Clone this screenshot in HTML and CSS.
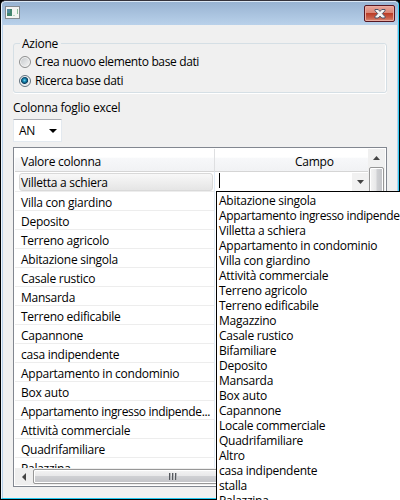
FILE: index.html
```html
<!DOCTYPE html>
<html lang="it">
<head>
<meta charset="utf-8">
<title>Ricerca base dati</title>
<link rel="stylesheet" href="styles.css">
</head>
<body>
<div class="window">
  <header class="titlebar">
    <svg class="app-icon" width="15" height="13" viewBox="0 0 15 13">
      <rect x=".5" y=".5" width="14" height="12" fill="#f4f4f2" stroke="#858b91"/>
      <rect x="2" y="3" width="5" height="7" fill="#43856f"/>
      <rect x="2" y="3" width="3" height="4" fill="#528da0"/>
      <rect x="8" y="9" width="2" height="1" fill="#b5d7bf"/>
      <rect x="12" y="3" width="1" height="5" fill="#8bbd99"/>
    </svg>
    <button class="close" aria-label="Chiudi">
      <svg width="12" height="10" viewBox="0 0 12 10">
        <path d="M1 .5h3.200L6 2.400 7.800.5H11v1.300L8.300 4.600 11 7.600v1.400H7.800L6 7.100 4.200 9H1V7.600l2.700-3L1 1.800z" fill="#f5f5f5" stroke="#4c5568"/>
      </svg>
    </button>
  </header>
  <main class="content">
    <fieldset class="group">
      <legend>Azione</legend>
      <div class="option"><span class="radio"></span><span>Crea nuovo elemento base dati</span></div>
      <div class="option"><span class="radio checked"></span><span>Ricerca base dati</span></div>
    </fieldset>
    <div class="label">Colonna foglio excel</div>
    <div class="combo"><span>AN</span><svg width="8" height="4" viewBox="0 0 8 4"><path d="M0 0h8L4 4z"/></svg></div>
    <section class="table">
      <div class="view">
        <div class="first">
          <div class="head">Valore colonna</div>
          <div class="row selected"><span>Villetta a schiera</span></div>
          <div class="row">Villa con giardino</div>
          <div class="row">Deposito</div>
          <div class="row">Terreno agricolo</div>
          <div class="row">Abitazione singola</div>
          <div class="row">Casale rustico</div>
          <div class="row">Mansarda</div>
          <div class="row">Terreno edificabile</div>
          <div class="row">Capannone</div>
          <div class="row">casa indipendente</div>
          <div class="row">Appartamento in condominio</div>
          <div class="row">Box auto</div>
          <div class="row tight">Appartamento ingresso indipende...</div>
          <div class="row">Attività commerciale</div>
          <div class="row">Quadrifamiliare</div>
          <div class="row">Palazzina</div>
        </div>
        <div class="second">
          <div class="head campo">Campo</div>
          <div class="editor">
            <span class="caret"></span>
            <span class="drop"><svg width="7" height="4" viewBox="0 0 7 4"><path d="M0 0h7L3.500 4z" fill="#444"/></svg></span>
          </div>
          <div class="popup">
            <div>Abitazione singola</div>
            <div class="tight">Appartamento ingresso indipende</div>
            <div>Villetta a schiera</div>
            <div>Appartamento in condominio</div>
            <div>Villa con giardino</div>
            <div>Attività commerciale</div>
            <div>Terreno agricolo</div>
            <div>Terreno edificabile</div>
            <div>Magazzino</div>
            <div>Casale rustico</div>
            <div>Bifamiliare</div>
            <div>Deposito</div>
            <div>Mansarda</div>
            <div>Box auto</div>
            <div>Capannone</div>
            <div>Locale commerciale</div>
            <div>Quadrifamiliare</div>
            <div>Altro</div>
            <div>casa indipendente</div>
            <div>stalla</div>
            <div>Palazzina</div>
          </div>
        </div>
        <div class="vscroll">
          <div class="up"><svg width="7" height="4" viewBox="0 0 7 4"><path d="M0 4h7L3.500 0z" fill="#444"/></svg></div>
          <div class="vthumb"></div>
        </div>
      </div>
      <div class="hscroll">
        <div class="left"><svg width="4" height="8" viewBox="0 0 4 8"><path d="M4 0v8L0 4z" fill="#444"/></svg></div>
        <div class="hthumb"><i></i><i></i><i></i></div>
      </div>
    </section>
  </main>
</div>
</body>
</html>
```

FILE: styles.css
```css
* { box-sizing: border-box; }
body {
  margin: 0;
  width: 400px;
  height: 500px;
  overflow: hidden;
  background: #000;
  color: #000;
  font: 12px/15px "Open Sans", "Noto Sans", sans-serif;
  letter-spacing: -0.25px;
  white-space: nowrap;
}
.window {
  height: 499px;
  margin-left: 1px;
  width: 398px;
  display: flex;
  flex-direction: column;
  border-top: 1px solid #34323b;
  border-left: 1px solid #edf5fd;
  border-right: 1px solid #35cdf4;
  border-bottom: 1px solid #22c8ef;
  border-radius: 5px 5px 0 0;
  background: #b9d1ea;
}
.titlebar {
  height: 24px;
  display: flex;
  justify-content: space-between;
  align-items: flex-start;
  padding: 3px 3px 0 3px;
  border-top: 1px solid #dbe8f5;
  border-radius: 4px 4px 0 0;
  background: linear-gradient(#98b3d2, #b9d1ea);
}
.app-icon { margin-top: 1px; }
.close {
  width: 31px;
  height: 17px;
  display: flex;
  align-items: center;
  justify-content: center;
  padding: 0;
  border: 1px solid #561722;
  border-radius: 2px;
  box-shadow: inset 0 0 0 1px #e9aba0;
  background: linear-gradient(#e8a69c, #d98473 48%, #bb3d27 50%, #c9604b 80%, #dc8b75);
}
.content {
  flex: 1;
  margin: 0 1px;
  padding: 11px 9px 0 10px;
  background: #f0f0f0;
  min-height: 0;
}
.group {
  margin: 0;
  width: 374px;
  height: 57px;
  padding: 1px 0 0 5px;
  border: 1px solid #d5dfe5;
  border-radius: 3px;
  box-shadow: 0 1px #fff, inset -1px 0 #fff;
}
.group legend { margin-left: 1px; padding: 0 3px 0 2px; line-height: 15px; }
.option { display: flex; align-items: center; height: 19px; gap: 4px; letter-spacing: -0.36px; }
.radio {
  width: 12px;
  height: 12px;
  border: 1px solid #8e8f8f;
  border-radius: 50%;
  background: linear-gradient(135deg, #c3c7ca, #f6f6f6);
  box-shadow: inset 0 0 0 1px #f4f4f4;
}
.radio.checked {
  border-color: #62727e;
  background: radial-gradient(circle at 45% 43%, #78d4ee 0, #168bb5 1.500px, #0b3c5c 3.200px, #dfe6ea 4px);
}
.label { margin-top: 7px; height: 15px; }
.combo {
  margin-top: 4px;
  width: 49px;
  height: 23px;
  display: flex;
  align-items: center;
  justify-content: space-between;
  padding: 0 4px 1px 5px;
  border: 1px solid #e3e9ef;
  border-top-color: #abadb3;
  border-radius: 1px;
  background: #fff;
}
.combo svg { margin-top: 2px; }
.table {
  margin-top: 5px;
  width: 374px;
  height: 340px;
  border: 1px solid #828790;
  padding: 1px;
  background: #fff;
}
.view { display: flex; height: 319px; }
.first {
  width: 200px;
  height: 319px;
  overflow: hidden;
  border-right: 1px solid #e2ecf7;
}
.head {
  height: 23px;
  padding: 5px 0 0 6px;
  line-height: 16px;
  border-bottom: 1px solid #d5d5d5;
  background: linear-gradient(#fff 38%, #f7f8fa 40%, #f1f2f4);
}
.row {
  height: 19px;
  padding: 3px 0 0 6px;
  line-height: 15px;
  border-bottom: 1px solid #ededed;
}
.row.selected { height: 20px; padding: 1px 1px 0 4px; }
.row.selected span {
  display: block;
  height: 18px;
  line-height: 18px;
  padding-left: 1px;
  border: 1px solid #d9d9d9;
  border-radius: 3px;
  background: linear-gradient(#f8f8f8, #e5e5e5);
}
.tight { letter-spacing: -0.34px; }
.second { flex: 1; position: relative; }
.campo { padding-left: 80px; box-shadow: -1px 0 #dedfe1; }
.editor { height: 19px; display: flex; justify-content: space-between; padding: 1px 0 0 4px; }
.caret { width: 1px; height: 15px; background: #000; }
.drop { width: 16px; height: 18px; display: flex; align-items: center; justify-content: center; background: #f1f1f1; }
.popup {
  position: absolute;
  z-index: 2;
  left: 1px;
  top: 42px;
  width: 190px;
  height: 320px;
  overflow: hidden;
  padding: 1px 0 0 2px;
  border: 1px solid #000;
  background: #fff;
}
.popup div { height: 15px; line-height: 15px; }
.vscroll { width: 17px; background: #f0f0f0; }
.up { height: 17px; display: flex; align-items: center; justify-content: center; }
.vthumb {
  width: 15px;
  height: 100px;
  margin: 1px auto 0;
  border: 1px solid #979797;
  border-radius: 2px;
  box-shadow: inset 0 0 0 1px #fff;
  background: linear-gradient(90deg, #f4f4f4, #e8e8e9 45%, #cfd0d3 55%, #c2c3c7);
}
.hscroll { height: 17px; padding-top: 1px; display: flex; background: #eee; }
.left { width: 18px; height: 15px; padding-right: 1px; display: flex; align-items: center; justify-content: center; }
.hthumb {
  width: 278px;
  height: 15px;
  display: flex;
  align-items: center;
  justify-content: center;
  gap: 2px;
  border: 1px solid #979797;
  border-radius: 2px;
  box-shadow: inset 0 0 0 1px #fff;
  background: linear-gradient(#f4f4f4, #e8e8e9 45%, #cfd0d3 50%, #c2c3c7);
}
.hthumb i { width: 1px; height: 7px; background: #55585d; box-shadow: 1px 0 #b5b7ba; }
```
